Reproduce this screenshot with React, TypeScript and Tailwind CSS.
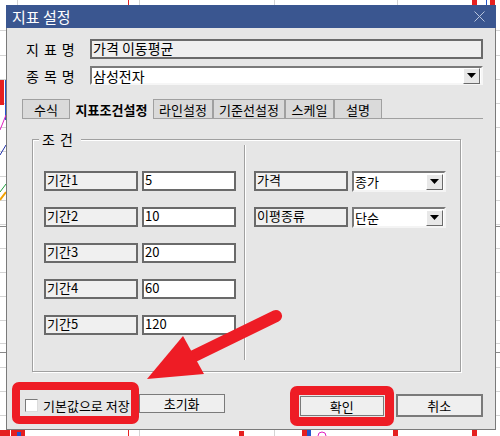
import React from "react";

const KR = { fontFamily: '"Noto Sans CJK KR", "Noto Sans", sans-serif' };

function Field({ label, value }: { label: string; value: string }) {
  return (
    <div className="flex items-start h-[20px]">
      <div className="w-[94px] h-[20px] bg-[#f0f0f0] border-2 border-[#6a6a6a] text-[13px] leading-[14px] pl-[1px] text-black">
        {label}
      </div>
      <div className="ml-[4px] w-[94px] h-[20px] bg-white border-2 border-[#6a6a6a] text-[13px] leading-[14px] pl-[1px] text-black">
        {value}
      </div>
    </div>
  );
}

function DropBtn() {
  return (
    <div className="w-[17px] h-[16px] bg-[#e8e8e8] border border-t-white border-l-white border-r-[#6a6a6a] border-b-[#6a6a6a] flex items-center justify-center">
      <svg width="9" height="5" viewBox="0 0 9 5">
        <polygon points="0,0 9,0 4.5,5" fill="#000" />
      </svg>
    </div>
  );
}

function SelectRow({ label, value }: { label: string; value: string }) {
  return (
    <div className="flex items-start h-[20px]">
      <div className="w-[94px] h-[20px] bg-[#f0f0f0] border-2 border-[#6a6a6a] text-[13px] leading-[14px] pl-[1px] text-black">
        {label}
      </div>
      <div className="ml-[4px] w-[94px] h-[21px] bg-white border-2 border-t-[#7a7a7a] border-l-[#7a7a7a] border-r-[#f4f4f4] border-b-[#f4f4f4] flex items-center justify-between pr-[1px]">
        <span className="text-[13px] leading-[15px] pl-[1px] text-black">{value}</span>
        <DropBtn />
      </div>
    </div>
  );
}

const tabs = [
  { t: "수식", w: 48 },
  { t: "지표조건설정", w: 83, sel: true },
  { t: "라인설정", w: 60 },
  { t: "기준선설정", w: 72 },
  { t: "스케일", w: 49 },
  { t: "설명", w: 48 },
];

function Background() {
  const hs = [30, 55, 79, 103, 127, 151, 176, 200, 224, 248, 272, 296, 320, 343, 367, 391, 415];
  return (
    <svg className="absolute inset-0" width="500" height="436" viewBox="0 0 500 436">
      <rect width="500" height="436" fill="#fff" />
      {hs.map((y) => (
        <line key={y} x1="0" x2="500" y1={y + 0.5} y2={y + 0.5} stroke="#d4d4d4" />
      ))}
      <line x1="0" x2="500" y1="226.5" y2="226.5" stroke="#8a8a8a" />
      <line x1="0" x2="500" y1="352.5" y2="352.5" stroke="#8a8a8a" />
      {[17, 139, 274, 397].map((x) => (
        <line key={x} x1={x + 0.5} x2={x + 0.5} y1="0" y2="436" stroke="#d4d4d4" />
      ))}
      <line x1="128.5" x2="128.5" y1="0" y2="436" stroke="#e52020" />
      <rect x="0" y="80" width="4" height="25" fill="#e52020" />
      <line x1="5.5" x2="5.5" y1="80" y2="120" stroke="#2255cc" />
      <polyline points="0,130 6,115" stroke="#e020c0" fill="none" />
      <polyline points="0,155 6,145" stroke="#2233aa" fill="none" />
      <polyline points="0,200 6,192" stroke="#f0a000" strokeWidth="2" fill="none" />
      <polyline points="0,192 6,184" stroke="#20a040" fill="none" />
      <rect x="472" y="0" width="5" height="5" fill="#e52020" />
      <rect x="490" y="0" width="5" height="5" fill="#e52020" />
      <line x1="486.5" x2="486.5" y1="0" y2="5" stroke="#2255cc" />
      <rect x="0" y="430" width="10" height="6" fill="#e52020" />
      <rect x="11" y="430" width="14" height="6" fill="#e52020" />
      <rect x="17" y="432" width="4" height="4" fill="#2255cc" />
      <rect x="239" y="431" width="5" height="5" fill="#e52020" />
      <rect x="302" y="430" width="5" height="6" fill="#e52020" />
      <rect x="307" y="430" width="4" height="6" fill="#2255cc" />
      <circle cx="322" cy="436" r="4" stroke="#e020c0" fill="none" />
      <rect x="393" y="430" width="5" height="6" fill="#e52020" />
      <rect x="472" y="430" width="5" height="6" fill="#e52020" />
    </svg>
  );
}

export default function App() {
  return (
    <div className="relative w-[500px] h-[436px] overflow-hidden bg-white" style={KR}>
      <Background />
      {/* dialog window */}
      <div className="absolute left-[6px] top-[5px] w-[490px] h-[425px] flex flex-col bg-[#e6e6e6] border-x border-b border-[#7a7a7a]">
        {/* title bar */}
        <div className="h-[23px] -mx-px bg-[#3a5690] flex items-center justify-between pl-[6px] pr-[11px]">
          <span className="text-white text-[15px] leading-[17px]">지표 설정</span>
          <svg width="11" height="11" viewBox="0 0 11 11">
            <path d="M0.5 0.5 L10.5 10.5 M10.5 0.5 L0.5 10.5" stroke="#b8c4dc" strokeWidth="1" />
          </svg>
        </div>

        {/* row 1 */}
        <div className="mt-[11px] flex items-center">
          <div className="ml-[19px] w-[64px] text-[14px] leading-[16px] tracking-[5px] text-black">지표명</div>
          <div className="w-[393px] h-[20px] bg-[#efefef] border-2 border-[#6a6a6a] text-[14px] leading-[15px] pl-[1px] text-black">
            가격 이동평균
          </div>
        </div>

        {/* row 2 */}
        <div className="mt-[7px] flex items-center">
          <div className="ml-[19px] w-[64px] text-[14px] leading-[16px] tracking-[5px] text-black">종목명</div>
          <div className="w-[393px] h-[19px] bg-white border-2 border-t-[#7a7a7a] border-l-[#7a7a7a] border-r-[#f6f6f6] border-b-[#f6f6f6] flex items-center justify-between pr-[1px]">
            <span className="text-[14px] leading-[16px] pl-[1px] text-black">삼성전자</span>
            <DropBtn />
          </div>
        </div>

        {/* tabs */}
        <div className="mt-[15px] ml-[15px] mr-[12px] flex items-end h-[19px] border-b border-[#a0a0a0]">
          {tabs.map((tb) =>
            tb.sel ? (
              <div
                key={tb.t}
                style={{ width: tb.w }}
                className="h-[20px] -mb-px bg-[#e6e6e6] flex items-center justify-center text-[13px] leading-[15px] font-bold text-black"
              >
                {tb.t}
              </div>
            ) : (
              <div
                key={tb.t}
                style={{ width: tb.w }}
                className="h-[19px] bg-[#dadada] border border-b-0 border-[#a0a0a0] flex items-center justify-center text-[13px] leading-[15px] text-black"
              >
                {tb.t}
              </div>
            )
          )}
        </div>

        {/* group box */}
        <div className="relative mt-[20px] ml-[25px] w-[429px] h-[233px] border border-[#a0a0a0] shadow-[inset_1px_1px_0_#ffffff,1px_1px_0_#ffffff] flex">
          <div className="absolute left-[6px] -top-[9px] px-[3px] bg-[#e6e6e6] text-[14px] leading-[16px] tracking-[5px] text-black">조건</div>
          <div className="ml-[11px] mt-[31px] flex flex-col gap-[16px]">
            <Field label="기간1" value="5" />
            <Field label="기간2" value="10" />
            <Field label="기간3" value="20" />
            <Field label="기간4" value="60" />
            <Field label="기간5" value="120" />
          </div>
          <div className="ml-[8px] mt-[5px] h-[215px] w-[2px] border-l border-[#a0a0a0] bg-white" />
          <div className="ml-[8px] mt-[31px] flex flex-col gap-[16px]">
            <SelectRow label="가격" value="종가" />
            <SelectRow label="이평종류" value="단순" />
          </div>
        </div>

        {/* bottom buttons */}
        <div className="mt-[22px] flex items-start">
          <div className="ml-[18px] mt-[4px] flex items-center">
            <div className="w-[13px] h-[13px] bg-white border border-t-[#7a7a7a] border-l-[#7a7a7a] border-r-[#dcdcdc] border-b-[#dcdcdc]" />
            <span className="ml-[5px] text-[13px] leading-[15px] text-black">기본값으로 저장</span>
          </div>
          <div className="ml-[9px] w-[86px] h-[19px] bg-[#efefef] border border-[#7a7a7a] flex items-center justify-center text-[13px] leading-[15px] text-black">
            초기화
          </div>
          <div className="ml-[75px] mt-[2px] w-[84px] h-[20px] bg-[#efefef] border border-[#7a7a7a] flex items-center justify-center text-[13px] leading-[15px] text-black">
            확인
          </div>
          <div className="ml-[12px] w-[87px] h-[23px] bg-[#efefef] border-2 border-[#7a7a7a] flex items-center justify-center text-[13px] leading-[15px] text-black">
            취소
          </div>
        </div>
      </div>

      {/* red annotations */}
      <div className="absolute left-[12px] top-[382px] w-[127px] h-[42px] border-[8px] border-[#ee1c25] rounded-[7px]" />
      <div className="absolute left-[290px] top-[386px] w-[104px] h-[40px] border-[9px] border-[#ee1c25] rounded-[7px]" />
      <svg className="absolute left-0 top-0" width="500" height="436" viewBox="0 0 500 436">
        <line x1="192" y1="357" x2="276" y2="316" stroke="#ee1c25" strokeWidth="12" strokeLinecap="round" />
        <polygon points="147,379 183,336 204,374" fill="#ee1c25" />
      </svg>
    </div>
  );
}
